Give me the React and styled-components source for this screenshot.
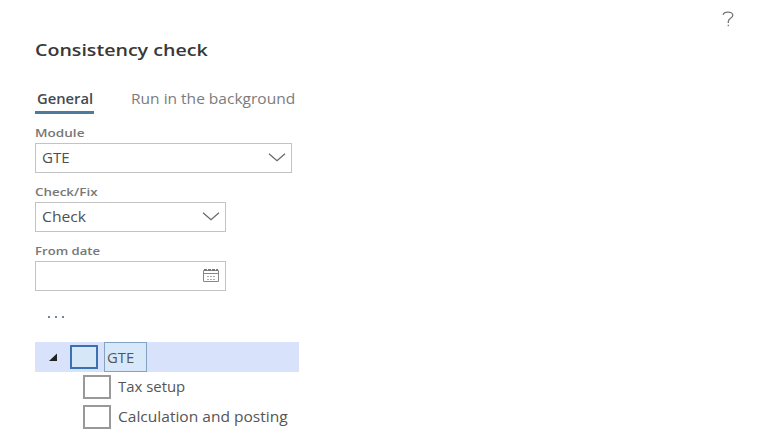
import React from "react";
import styled, { createGlobalStyle } from "styled-components";

const GlobalStyle = createGlobalStyle`
  * { box-sizing: border-box; }
  body {
    margin: 0;
    background: #fff;
    color: #505050;
    font-family: "Open Sans", "Noto Sans", sans-serif;
    overflow: hidden;
  }
`;

const Page = styled.main`
  display: flex;
  justify-content: space-between;
  width: 759px;
  height: 441px;
  padding-left: 35px;
`;

const Dialog = styled.section`
  display: flex;
  flex-direction: column;
  width: 264px;
  padding-top: 38px;
`;

const HelpButton = styled.button`
  width: 16px;
  height: 22px;
  margin: 8px 23px 0 0;
  padding: 0;
  border: 0;
  background: none;
  svg { display: block; }
`;

/* Widened lettering; $x is the horizontal factor. */
const Wide = styled.span`
  display: inline-block;
  transform: scaleX(${(p) => p.$x});
  transform-origin: 0 50%;
  white-space: nowrap;
`;

const Title = styled.h1`
  margin: 0;
  height: 24px;
  font-size: 17px;
  line-height: 24px;
  font-weight: 600;
  color: #383838;
`;

const Tabs = styled.nav`
  display: flex;
  gap: 37px;
  height: 27px;
  margin-top: 25px;
`;

const Tab = styled.div`
  width: ${(p) => p.$width}px;
  height: 27px;
  padding-left: ${(p) => (p.$active ? 2 : 0)}px;
  border-bottom: 3px solid ${(p) => (p.$active ? "#4b7c9c" : "transparent")};
  font-size: 14px;
  line-height: 23px;
  font-weight: ${(p) => (p.$active ? 600 : 400)};
  color: ${(p) => (p.$active ? "#444a50" : "#7c7c7c")};
`;

const Field = styled.div`
  display: flex;
  flex-direction: column;
  width: ${(p) => p.$width}px;
  margin-top: 11px;
`;

const Label = styled.label`
  height: 18px;
  font-size: 11.5px;
  line-height: 16px;
  font-weight: 600;
  color: #777;
`;

const Control = styled.div`
  display: flex;
  align-items: center;
  height: 30px;
  padding: 0 5px 0 6px;
  border: 1px solid #c3c3c3;
  font-size: 14px;
  line-height: 30px;
  svg { margin-left: auto; }
`;

const MoreButton = styled.button`
  display: flex;
  gap: 5px;
  height: 6px;
  margin: 23px 0 0 13px;
  padding: 2px 0 0;
  border: 0;
  background: none;
`;

const Dot = styled.i`
  width: 2px;
  height: 2px;
  background: #66899b;
`;

const Tree = styled.div`
  display: flex;
  flex-direction: column;
  margin-top: 22px;
`;

const TreeRow = styled.div`
  display: flex;
  align-items: center;
  height: 30px;
  padding-left: ${(p) => (p.$selected ? 13 : 48)}px;
  background: ${(p) => (p.$selected ? "#d8e3fb" : "transparent")};
`;

const Checkbox = styled.span`
  flex: none;
  width: 28px;
  height: 24px;
  border: 2px solid ${(p) => (p.$focused ? "#3b70b3" : "#999")};
  background: ${(p) => (p.$focused ? "#d6e7f8" : "#fff")};
`;

const NodeText = styled.span`
  margin-left: 7px;
  font-size: 14px;
  line-height: 30px;
  color: #555;
`;

const FocusedNode = styled(NodeText)`
  width: 43px;
  height: 30px;
  margin-left: 6px;
  padding-left: 2px;
  border: 1px solid #82a3c3;
  background: #d8e8fb;
`;

const Expander = styled.svg`
  width: 10px;
  height: 10px;
  margin-right: 12px;
`;

const Chevron = () => (
  <svg width="18" height="10" viewBox="0 0 18 10" fill="none" stroke="#666" strokeWidth="1.2">
    <path d="M1 0.8 9 7.8 17 0.8" />
  </svg>
);

const Calendar = () => (
  <svg width="18" height="16" viewBox="0 0 18 16" fill="none" stroke="#888">
    <path d="M1.5 2.5h15v11h-15zM1.5 5.5h15" />
    <path d="M2 2h14" stroke="#777" strokeWidth="2" strokeDasharray="3 1" />
    <path d="M5 8.5h9M5 11.5h9" stroke="#aaa" strokeDasharray="2 1" />
  </svg>
);

export default function App() {
  return (
    <>
      <GlobalStyle />
      <Page>
        <Dialog>
          <Title><Wide $x={1.153}>Consistency check</Wide></Title>
          <Tabs>
            <Tab $active $width={59}><Wide $x={1.055}>General</Wide></Tab>
            <Tab $width={165}><Wide $x={1.108}>Run in the background</Wide></Tab>
          </Tabs>
          <Field $width={257}>
            <Label><Wide $x={1.18}>Module</Wide></Label>
            <Control><Wide $x={1.08}>GTE</Wide><Chevron /></Control>
          </Field>
          <Field $width={191}>
            <Label><Wide $x={1.165}>Check/Fix</Wide></Label>
            <Control><Wide $x={1.12}>Check</Wide><Chevron /></Control>
          </Field>
          <Field $width={191}>
            <Label><Wide $x={1.14}>From date</Wide></Label>
            <Control><Calendar /></Control>
          </Field>
          <MoreButton aria-label="More options"><Dot /><Dot /><Dot /></MoreButton>
          <Tree>
            <TreeRow $selected>
              <Expander viewBox="0 0 10 10"><path d="M9 1.5V9H1z" fill="#222" /></Expander>
              <Checkbox $focused />
              <FocusedNode><Wide $x={1.06}>GTE</Wide></FocusedNode>
            </TreeRow>
            <TreeRow><Checkbox /><NodeText><Wide $x={1.065}>Tax setup</Wide></NodeText></TreeRow>
            <TreeRow><Checkbox /><NodeText><Wide $x={1.11}>Calculation and posting</Wide></NodeText></TreeRow>
          </Tree>
        </Dialog>
        <HelpButton aria-label="Help">
          <svg width="16" height="22" viewBox="0 0 16 22" fill="none" stroke="#777" strokeWidth="1.3">
            <path d="M3.2 6.8C3.5 4.9 5.5 4.2 8 4.2c3 0 4.8 1.1 4.8 3.1 0 2.9-4.5 3.2-4.5 6.2V15M8.3 16.8v1.4" />
          </svg>
        </HelpButton>
      </Page>
    </>
  );
}
